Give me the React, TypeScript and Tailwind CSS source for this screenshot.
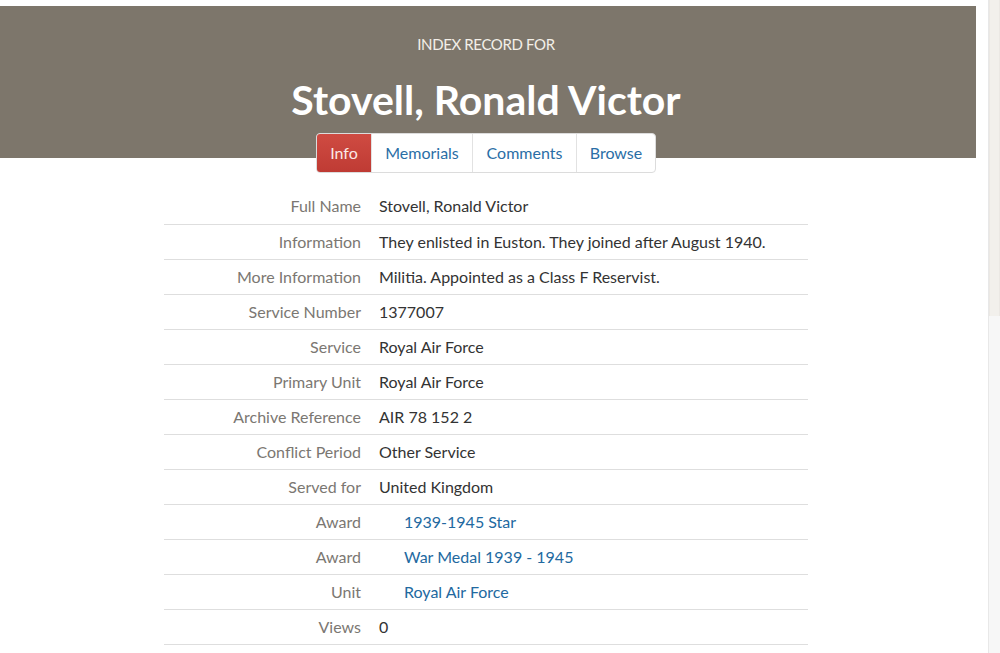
import React from "react";

type Row = { label: string; value: string; link?: boolean };

const rows: Row[] = [
  { label: "Full Name", value: "Stovell, Ronald Victor" },
  { label: "Information", value: "They enlisted in Euston. They joined after August 1940." },
  { label: "More Information", value: "Militia. Appointed as a Class F Reservist." },
  { label: "Service Number", value: "1377007" },
  { label: "Service", value: "Royal Air Force" },
  { label: "Primary Unit", value: "Royal Air Force" },
  { label: "Archive Reference", value: "AIR 78 152 2" },
  { label: "Conflict Period", value: "Other Service" },
  { label: "Served for", value: "United Kingdom" },
  { label: "Award", value: "1939-1945 Star", link: true },
  { label: "Award", value: "War Medal 1939 - 1945", link: true },
  { label: "Unit", value: "Royal Air Force", link: true },
  { label: "Views", value: "0" },
];

const tabs = [
  { name: "Info", w: "w-[54px]", active: true },
  { name: "Memorials", w: "w-[101px]" },
  { name: "Comments", w: "w-[104px]" },
  { name: "Browse", w: "w-[79px]" },
];

export default function App() {
  return (
    <div className="flex h-[653px] overflow-hidden bg-white font-['Lato','Liberation_Sans',sans-serif]">
      <main className="w-[976px] shrink-0 pt-[6px]">
        <header className="flex h-[152px] flex-col items-center bg-[#7d766b] pr-[4px] pt-[23px]">
          <p className="text-[15px] leading-[30px] tracking-tight text-[#f3efe8]">INDEX RECORD FOR</p>
          <h1 className="mt-[17px] text-[41px] font-bold leading-[48px] text-white">Stovell, Ronald Victor</h1>
        </header>

        <nav className="relative -mt-[25px] flex justify-center pr-[4px]">
          <div className="flex h-[40px] overflow-hidden rounded-[4px] border border-[#dcdcdc] bg-white">
            {tabs.map((t) => (
              <a
                key={t.name}
                className={`flex items-center justify-center text-[16px] ${t.w} ${
                  t.active
                    ? "bg-gradient-to-b from-[#cf4b42] to-[#bf3b34] text-[#fbe9e7]"
                    : "border-l border-[#e2e2e2] text-[#2a6ea6]"
                }`}
              >
                {t.name}
              </a>
            ))}
          </div>
        </nav>

        <table className="ml-[164px] mt-[16px] w-[644px] border-collapse text-[16px]">
          <tbody>
            {rows.map((r, i) => (
              <tr key={i} className="h-[35px] border-b border-[#dedede]">
                <td className="w-[215px] pr-[18px] text-right text-[#7b7772]">{r.label}</td>
                <td className={r.link ? "pl-[25px] text-[#22699f]" : "text-[#333333]"}>{r.value}</td>
              </tr>
            ))}
          </tbody>
        </table>
      </main>
      <div className="w-[12px] shrink-0" />
      <div className="flex w-[12px] shrink-0 flex-col border-l border-[#e8e8e8] bg-[#f7f7f7]">
        <div className="h-[316px] border-x border-[#ebe8e4] bg-[#f2f0ec]" />
      </div>
    </div>
  );
}
